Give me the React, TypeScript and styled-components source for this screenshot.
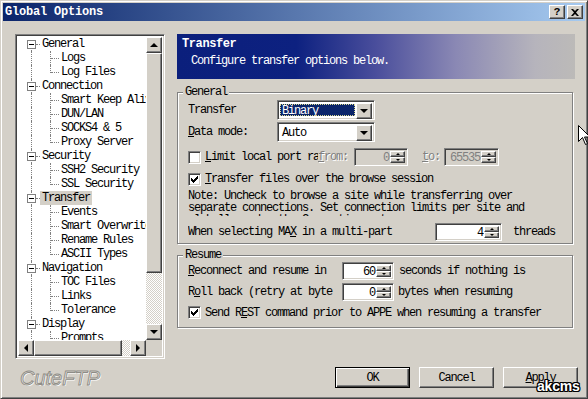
import styled, { createGlobalStyle, css } from 'styled-components'

const GlobalStyle = createGlobalStyle`
  * { box-sizing: border-box; }
  html, body { margin: 0; padding: 0; background: #d4d0c8; overflow: hidden; }
  body {
    font-family: 'Liberation Mono', 'DejaVu Sans Mono', monospace;
    font-size: 12px;
    letter-spacing: -1.2px;
    color: #000;
  }
  u { text-decoration-thickness: 1px; text-underline-offset: 1px; }
`

const raised = css`
  background: #d4d0c8;
  border: 1px solid;
  border-color: #fff #404040 #404040 #fff;
  box-shadow: inset -1px -1px 0 #808080;
`

const sunken = css`
  border: 1px solid;
  border-color: #808080 #fff #fff #808080;
  box-shadow: inset 1px 1px 0 #404040, inset -1px -1px 0 #d4d0c8;
`

const checkered = css`
  background: repeating-conic-gradient(#d4d0c8 0 25%, #fff 0 50%) 0 0 / 2px 2px;
`

const Window = styled.div`
  position: relative;
  width: 588px;
  height: 399px;
  background: #d4d0c8;
  border: 1px solid;
  border-color: #d4d0c8 #404040 #404040 #d4d0c8;
  box-shadow: inset 1px 1px 0 #fff, inset -1px -1px 0 #808080;
  padding: 2px;
  display: flex;
  flex-direction: column;
`

const TitleBar = styled.div`
  height: 18px;
  display: flex;
  align-items: center;
  justify-content: space-between;
  padding: 0 2px;
  background: linear-gradient(to right, #0a246a, #a6caf0);
`

const TitleText = styled.span`
  color: #fff;
  font-weight: bold;
  letter-spacing: -0.2px;
`

const CaptionButtons = styled.div`
  display: flex;
  gap: 2px;
`

const CaptionButton = styled.div`
  ${raised}
  width: 16px;
  height: 14px;
  display: flex;
  align-items: center;
  justify-content: center;
  font-weight: bold;
  font-size: 11px;
  letter-spacing: 0;
  line-height: 12px;
`

const Content = styled.div`
  display: flex;
  gap: 12px;
  padding: 13px 0 0 12px;
`

const LeftCol = styled.div`
  width: 150px;
  display: flex;
  flex-direction: column;
`

const TreeBox = styled.div`
  ${sunken}
  width: 150px;
  height: 325px;
  padding: 2px;
  background: #fff;
  display: grid;
  grid-template-columns: 1fr 16px;
  grid-template-rows: 1fr 16px;
`

const TreePane = styled.div`
  overflow: hidden;
  display: flex;
  flex-direction: column;
`

const TreeRow = styled.div`
  display: flex;
  height: 14px;
  flex-shrink: 0;
`

const RootGutter = styled.div<{ $first?: boolean; $parent?: boolean }>`
  position: relative;
  width: 22px;
  flex-shrink: 0;

  &::before {
    content: '';
    position: absolute;
    left: 13px;
    top: ${({ $first }) => ($first ? '7px' : '0')};
    bottom: 0;
    border-left: 1px dotted #808080;
  }

  ${({ $parent }) =>
    $parent &&
    css`
      &::after {
        content: '';
        position: absolute;
        left: 18px;
        width: 4px;
        top: 7px;
        border-top: 1px dotted #808080;
      }
    `}
`

const ExpandBox = styled.span`
  position: absolute;
  left: 9px;
  top: 3px;
  z-index: 1;
  width: 9px;
  height: 9px;
  border: 1px solid #808080;
  background: #fff;

  &::before {
    content: '';
    position: absolute;
    left: 1px;
    top: 3px;
    width: 5px;
    height: 1px;
    background: #000;
  }
`

const ChildGutter = styled.div<{ $last?: boolean }>`
  position: relative;
  width: 19px;
  flex-shrink: 0;

  &::before {
    content: '';
    position: absolute;
    left: 10px;
    top: 0;
    height: ${({ $last }) => ($last ? '8px' : '14px')};
    border-left: 1px dotted #808080;
  }

  &::after {
    content: '';
    position: absolute;
    left: 11px;
    width: 8px;
    top: 7px;
    border-top: 1px dotted #808080;
  }
`

const TreeLabel = styled.span<{ $selected?: boolean }>`
  padding: 0 2px;
  line-height: 14px;
  white-space: nowrap;
  background: ${({ $selected }) => ($selected ? '#d4d0c8' : 'transparent')};
`

const VScroll = styled.div`
  display: flex;
  flex-direction: column;
`

const HScroll = styled.div`
  display: flex;
`

const ScrollBtn = styled.div`
  ${raised}
  width: 16px;
  height: 16px;
  flex-shrink: 0;
  display: flex;
  align-items: center;
  justify-content: center;
`

const Thumb = styled.div<{ $len: number; $vertical?: boolean }>`
  ${raised}
  flex-shrink: 0;
  ${({ $len, $vertical }) => ($vertical ? `height: ${$len}px;` : `width: ${$len}px;`)}
`

const Track = styled.div`
  ${checkered}
  flex: 1;
`

const Corner = styled.div`
  background: #d4d0c8;
`

const Arrow = styled.span<{ $dir: 'up' | 'down' | 'left' | 'right'; $s?: number }>`
  width: 0;
  height: 0;
  ${({ $dir, $s = 4 }) => {
    const t = 'solid transparent'
    if ($dir === 'up')
      return `border-left: ${$s}px ${t}; border-right: ${$s}px ${t}; border-bottom: ${$s}px solid #000;`
    if ($dir === 'down')
      return `border-left: ${$s}px ${t}; border-right: ${$s}px ${t}; border-top: ${$s}px solid #000;`
    if ($dir === 'left')
      return `border-top: ${$s}px ${t}; border-bottom: ${$s}px ${t}; border-right: ${$s}px solid #000;`
    return `border-top: ${$s}px ${t}; border-bottom: ${$s}px ${t}; border-left: ${$s}px solid #000;`
  }}
`

const Logo = styled.div`
  margin-top: 8px;
  padding-left: 5px;
  font-family: 'Liberation Sans', Arial, sans-serif;
  font-style: italic;
  font-size: 20px;
  letter-spacing: 0;
  line-height: 22px;
  color: #e6e4de;
  -webkit-text-stroke: 0.9px #8e8c86;
  text-shadow: 1px 1px 0 #fff;
`

const RightCol = styled.div`
  width: 401px;
  display: flex;
  flex-direction: column;
`

const Banner = styled.div`
  width: 398px;
  height: 45px;
  padding: 4px 5px;
  color: #fff;
  background: linear-gradient(
    to right,
    #0b1f7c 0%,
    #0d2180 30%,
    #4a4e9c 50%,
    #8a88b4 70%,
    #b6b4bc 90%,
    #bcbab8 100%
  );
`

const BannerTitle = styled.div`
  font-weight: bold;
  letter-spacing: -0.4px;
  line-height: 13px;
`

const BannerText = styled.div`
  margin: 4px 0 0 9px;
  line-height: 13px;
`

const Group = styled.fieldset<{ $mt: number; $pb: number }>`
  width: 396px;
  min-inline-size: 0;
  margin: ${({ $mt }) => $mt}px 0 0;
  padding: 0 10px ${({ $pb }) => $pb}px;
  border: 1px solid #808080;
  box-shadow: inset 1px 1px 0 #fff, 1px 1px 0 #fff;
`

const Legend = styled.legend`
  margin-left: -5px;
  padding: 0 2px;
  line-height: 12px;
  background: #d4d0c8;
`

const FormRow = styled.div<{ $mt: number; $h: number }>`
  display: flex;
  align-items: center;
  height: ${({ $h }) => $h}px;
  margin-top: ${({ $mt }) => $mt}px;
  white-space: nowrap;
`

const FieldLabel = styled.span<{ $w?: number; $gap?: number }>`
  ${({ $w }) => ($w ? `width: ${$w}px; flex-shrink: 0; overflow: hidden;` : '')}
  margin-left: ${({ $gap = 0 }) => $gap}px;
`

const Disabled = styled.span<{ $gap?: number }>`
  color: #808080;
  text-shadow: 1px 1px 0 #fff;
  margin-left: ${({ $gap = 0 }) => $gap}px;
`

const Combo = styled.div`
  ${sunken}
  width: 98px;
  height: 20px;
  padding: 2px;
  background: #fff;
  display: flex;
`

const ComboText = styled.span<{ $selected?: boolean }>`
  flex: 1;
  padding: 0 2px;
  line-height: 16px;
  ${({ $selected }) =>
    $selected &&
    css`
      margin: 1px 1px 1px 0;
      line-height: 14px;
      background: #0a246a;
      color: #fff;
      outline: 1px dotted #d8d890;
      outline-offset: -1px;
    `}
`

const DropBtn = styled.div`
  ${raised}
  width: 16px;
  height: 16px;
  display: flex;
  align-items: center;
  justify-content: center;
`

const Spin = styled.div<{ $w: number; $disabled?: boolean; $gap?: number }>`
  ${sunken}
  width: ${({ $w }) => $w}px;
  height: 18px;
  padding: 2px;
  margin-left: ${({ $gap = 0 }) => $gap}px;
  flex-shrink: 0;
  display: flex;
  background: ${({ $disabled }) => ($disabled ? '#d4d0c8' : '#fff')};
  color: ${({ $disabled }) => ($disabled ? '#808080' : '#000')};
`

const SpinValue = styled.span`
  flex: 1;
  text-align: right;
  padding-right: 1px;
  line-height: 14px;
`

const SpinBtns = styled.div`
  width: 15px;
  display: flex;
  flex-direction: column;
`

const SpinBtn = styled.div`
  ${raised}
  flex: 1;
  display: flex;
  align-items: center;
  justify-content: center;
`

const CheckBox = styled.span`
  ${sunken}
  width: 13px;
  height: 13px;
  flex-shrink: 0;
  background: #fff;
  display: flex;
  align-items: center;
  justify-content: center;
  margin-right: 4px;
`

const Note = styled.div`
  margin-top: 4px;
  height: 26px;
  overflow: hidden;
  line-height: 12px;
  white-space: nowrap;
`

const ButtonRow = styled.div`
  display: flex;
  justify-content: flex-end;
  gap: 9px;
  margin-top: 39px;
`

const Button = styled.div<{ $default?: boolean }>`
  width: 75px;
  height: 21px;
  display: flex;
  align-items: center;
  justify-content: center;
  background: #d4d0c8;
  ${({ $default }) =>
    $default
      ? css`
          border: 1px solid #000;
          box-shadow: inset 1px 1px 0 #fff, inset -1px -1px 0 #404040, inset -2px -2px 0 #808080;
        `
      : css`
          border: 1px solid;
          border-color: #fff #404040 #404040 #fff;
          box-shadow: inset -1px -1px 0 #808080;
        `}
`

const Cursor = styled.svg`
  position: absolute;
  left: 577px;
  top: 124px;
`

const Watermark = styled.div`
  position: absolute;
  left: 536px;
  top: 377px;
  font-family: 'Liberation Sans', Arial, sans-serif;
  font-weight: bold;
  font-size: 14px;
  letter-spacing: -0.2px;
  color: #fff;
  text-shadow: 1px 0 0 #000, -1px 0 0 #000, 0 1px 0 #000, 0 -1px 0 #000, 1px 1px 0 #000,
    -1px -1px 0 #000, 1px -1px 0 #000, -1px 1px 0 #000;
`

const tree = [
  { label: 'General', children: ['Logs', 'Log Files'] },
  { label: 'Connection', children: ['Smart Keep Alive', 'DUN/LAN', 'SOCKS4 & 5', 'Proxy Server'] },
  { label: 'Security', children: ['SSH2 Security', 'SSL Security'] },
  { label: 'Transfer', children: ['Events', 'Smart Overwrite', 'Rename Rules', 'ASCII Types'], selected: true },
  { label: 'Navigation', children: ['TOC Files', 'Links', 'Tolerance'] },
  { label: 'Display', children: ['Prompts', 'Sounds'] },
]

const Check = () => (
  <svg width="7" height="7" viewBox="0 0 7 7">
    <path d="M0 2h1v1h1v1h1V3h1V2h1V1h1V0h1v3H6v1H5v1H4v1H3v1H2V6H1V5H0z" fill="#000" />
  </svg>
)

const SpinBox = ({ value, w, disabled, gap }: { value: string; w: number; disabled?: boolean; gap?: number }) => (
  <Spin $w={w} $disabled={disabled} $gap={gap}>
    <SpinValue>{value}</SpinValue>
    <SpinBtns>
      <SpinBtn>
        <Arrow $dir="up" $s={2} />
      </SpinBtn>
      <SpinBtn>
        <Arrow $dir="down" $s={2} />
      </SpinBtn>
    </SpinBtns>
  </Spin>
)

const TreeView = () => (
  <TreeBox>
    <TreePane>
      {tree.map((node, i) => (
        <div key={node.label}>
          <TreeRow>
            <RootGutter $first={i === 0} $parent>
              <ExpandBox />
            </RootGutter>
            <TreeLabel $selected={node.selected}>{node.label}</TreeLabel>
          </TreeRow>
          {node.children.map((child, j) => (
            <TreeRow key={child}>
              <RootGutter />
              <ChildGutter $last={j === node.children.length - 1} />
              <TreeLabel>{child}</TreeLabel>
            </TreeRow>
          ))}
        </div>
      ))}
    </TreePane>
    <VScroll>
      <ScrollBtn>
        <Arrow $dir="up" />
      </ScrollBtn>
      <Thumb $len={220} $vertical />
      <Track />
      <ScrollBtn>
        <Arrow $dir="down" />
      </ScrollBtn>
    </VScroll>
    <HScroll>
      <ScrollBtn>
        <Arrow $dir="left" />
      </ScrollBtn>
      <Thumb $len={88} />
      <Track />
      <ScrollBtn>
        <Arrow $dir="right" />
      </ScrollBtn>
    </HScroll>
    <Corner />
  </TreeBox>
)

export default function App() {
  return (
    <>
      <GlobalStyle />
      <Window>
        <TitleBar>
          <TitleText>Global Options</TitleText>
          <CaptionButtons>
            <CaptionButton>?</CaptionButton>
            <CaptionButton>
              <svg width="8" height="7" viewBox="0 0 8 7">
                <path d="M0 0h2l2 2 2-2h2L5 3.5 8 7H6L4 5 2 7H0l3-3.5z" fill="#000" />
              </svg>
            </CaptionButton>
          </CaptionButtons>
        </TitleBar>

        <Content>
          <LeftCol>
            <TreeView />
            <Logo>CuteFTP</Logo>
          </LeftCol>

          <RightCol>
            <Banner>
              <BannerTitle>Transfer</BannerTitle>
              <BannerText>Configure transfer options below.</BannerText>
            </Banner>

            <Group $mt={7} $pb={2}>
              <Legend>General</Legend>
              <FormRow $mt={2} $h={20}>
                <FieldLabel $w={89}>Transfer</FieldLabel>
                <Combo>
                  <ComboText $selected>Binary</ComboText>
                  <DropBtn>
                    <Arrow $dir="down" />
                  </DropBtn>
                </Combo>
              </FormRow>
              <FormRow $mt={2} $h={20}>
                <FieldLabel $w={89}>
                  <u>D</u>ata mode:
                </FieldLabel>
                <Combo>
                  <ComboText>Auto</ComboText>
                  <DropBtn>
                    <Arrow $dir="down" />
                  </DropBtn>
                </Combo>
              </FormRow>
              <FormRow $mt={6} $h={18}>
                <CheckBox />
                <FieldLabel $w={113}>
                  <u>L</u>imit local port range
                </FieldLabel>
                <Disabled>
                  <u>f</u>rom:
                </Disabled>
                <SpinBox value="0" w={54} disabled gap={6} />
                <Disabled $gap={14}>
                  <u>t</u>o:
                </Disabled>
                <SpinBox value="65535" w={55} disabled gap={4} />
              </FormRow>
              <FormRow $mt={6} $h={14}>
                <CheckBox>
                  <Check />
                </CheckBox>
                <span>
                  <u>T</u>ransfer files over the browse session
                </span>
              </FormRow>
              <Note>
                Note: Uncheck to browse a site while transferring over
                <br />
                separate connections. Set connection limits per site and
                <br />
                globally under the Connection category.
              </Note>
              <FormRow $mt={7} $h={18}>
                <FieldLabel $w={247}>
                  When selecting MA<u>X</u> in a multi-part
                </FieldLabel>
                <SpinBox value="4" w={67} />
                <FieldLabel $gap={11}>threads</FieldLabel>
              </FormRow>
            </Group>

            <Group $mt={5} $pb={8}>
              <Legend>Resume</Legend>
              <FormRow $mt={1} $h={18}>
                <FieldLabel $w={154}>
                  <u>R</u>econnect and resume in
                </FieldLabel>
                <SpinBox value="60" w={52} />
                <FieldLabel $gap={5}>seconds if nothing is</FieldLabel>
              </FormRow>
              <FormRow $mt={3} $h={18}>
                <FieldLabel $w={154}>
                  R<u>o</u>ll back (retry at byte
                </FieldLabel>
                <SpinBox value="0" w={52} />
                <FieldLabel $gap={4}>bytes when resuming</FieldLabel>
              </FormRow>
              <FormRow $mt={5} $h={13}>
                <CheckBox>
                  <Check />
                </CheckBox>
                <span>
                  Send R<u>E</u>ST command prior to APPE when resuming a transfer
                </span>
              </FormRow>
            </Group>

            <ButtonRow>
              <Button $default>OK</Button>
              <Button>Cancel</Button>
              <Button>
                <u>A</u>pply
              </Button>
            </ButtonRow>
          </RightCol>
        </Content>

        <Cursor width="12" height="21" viewBox="0 0 12 21">
          <path d="M0.5 0.5v16l4-4 3 7 2-1-3-6.5h5.5z" fill="#fff" stroke="#000" strokeWidth="1" />
        </Cursor>
        <Watermark>akcms</Watermark>
      </Window>
    </>
  )
}
